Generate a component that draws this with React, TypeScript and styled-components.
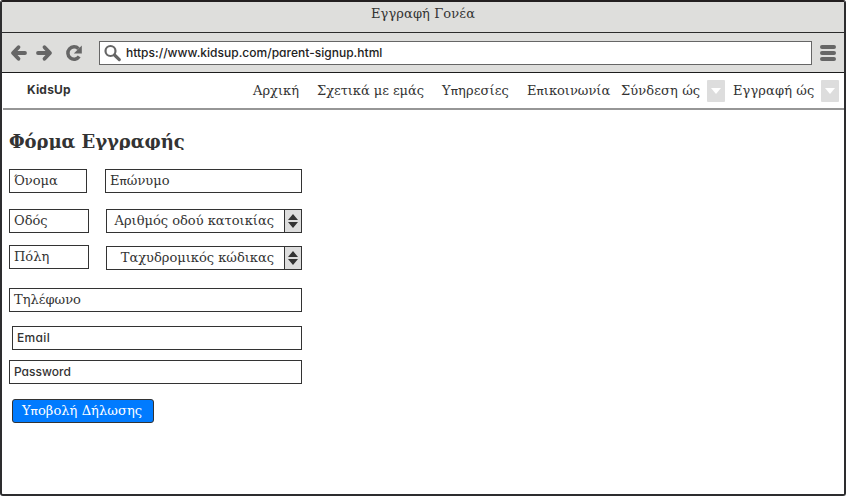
import React from "react";
import styled, { createGlobalStyle } from "styled-components";

const GlobalStyle = createGlobalStyle`
  * { box-sizing: border-box; }
  body { margin: 0; background: #fff; }
`;

const serif = `"DejaVu Serif", serif`;
const sans = `"Inter", "Liberation Sans", sans-serif`;

const Window = styled.div`
  width: 846px;
  height: 496px;
  border: 2px solid #2d2d2f;
  border-top-color: #231f20;
  border-radius: 3px;
  background: #fff;
  color: #333;
  font: 13px/16px ${serif};
  white-space: nowrap;
  overflow: hidden;
`;

const TitleBar = styled.header`
  height: 31px;
  padding-top: 4px;
  border-bottom: 1px solid #2b2b2b;
  background: #dededc;
  text-align: center;
  letter-spacing: 0.1px;
`;

const Toolbar = styled.div`
  display: flex;
  align-items: center;
  height: 40px;
  padding: 0 8px;
  border-bottom: 1px solid #1c1c1c;
  background: #dededc;
`;

const Controls = styled.div`
  display: flex;
  width: 89px;
`;

const AddressBar = styled.div`
  display: flex;
  align-items: center;
  width: 713px;
  height: 24px;
  margin-right: 8px;
  border: 1px solid #666;
  background: #fff;
  color: #222;
`;

const Latin = styled.span<{ $spacing?: number; $bold?: boolean }>`
  font-family: ${sans};
  font-size: 12px;
  font-weight: ${(p) => (p.$bold ? 700 : 500)};
  font-feature-settings: "cv11";
  letter-spacing: ${(p) => p.$spacing ?? 0}px;
`;

const Pi = styled.span`
  font-family: "Open Sans", sans-serif;
  font-size: 10.5px;
  font-weight: 600;
`;

const Nav = styled.nav`
  display: flex;
  align-items: center;
  height: 37px;
  margin-left: 1px;
  border-bottom: 2px solid #969696;
`;

const Brand = styled.div`
  width: 226px;
  padding: 0 0 1px 24px;
`;

const NavLink = styled.a<{ $width: number; $gap: number; $spacing?: number }>`
  flex: none;
  width: ${(p) => p.$width}px;
  margin-left: ${(p) => p.$gap}px;
  letter-spacing: ${(p) => p.$spacing ?? 0}px;
`;

const DropButton = styled.button`
  display: flex;
  flex: none;
  align-items: center;
  justify-content: center;
  width: 18px;
  height: 22px;
  padding: 0;
  margin-top: 1px;
  border: 0;
  border-radius: 1px;
  background: #ddd;
`;

const Form = styled.form`
  width: 300px;
  padding: 19px 0 0 7px;
`;

const Heading = styled.h1`
  height: 21px;
  margin: 0 0 19px;
  overflow: hidden;
  font: bold 18px/26px ${serif};
  letter-spacing: -0.07px;
`;

const Row = styled.div<{ $gap: number }>`
  display: flex;
  justify-content: space-between;
  margin-bottom: ${(p) => p.$gap}px;
`;

const Field = styled.div<{ $width: number }>`
  width: ${(p) => p.$width}px;
  height: 24px;
  padding: 3px 4px;
  border: 1px solid #333;
  background: #fff;
`;

const Stepper = styled.div<{ $top?: number }>`
  display: flex;
  width: 196px;
  height: 24px;
  margin-top: ${(p) => p.$top ?? 0}px;
  border: 1px solid #333;
`;

const StepperValue = styled.div`
  flex: 1;
  padding: 3px 10px 0 0;
  text-align: right;
`;

const StepperButtons = styled.div`
  display: flex;
  align-items: center;
  justify-content: center;
  width: 17px;
  border-left: 1px solid #333;
  background: #ddd;
`;

const Submit = styled.button`
  display: block;
  width: 142px;
  height: 24px;
  margin-left: 3px;
  padding: 0 2px 0 0;
  border: 1px solid #333;
  border-radius: 3px;
  background: #007bff;
  color: #fff;
  font: inherit;
  letter-spacing: 0.07px;
`;

const Icon = styled.svg`
  display: block;
  flex: none;
`;

const StepArrows = () => (
  <Icon width="12" height="16" viewBox="0 0 12 16" fill="#333">
    <path d="M6 1 11 7H1ZM1 9h10L6 15Z" />
  </Icon>
);

const DropArrow = () => (
  <Icon width="12" height="8" viewBox="0 0 12 8" fill="#fff">
    <path d="M1 1h10L6 7Z" />
  </Icon>
);

const NavigationIcons = () => (
  <Icon width="76" height="20" viewBox="0 0 76 20" fill="none" stroke="#666">
    <path
      d="M8.500 4.200 3 10l5.500 5.800M3.500 10H15M34.500 4.200 40 10l-5.500 5.800M39.500 10H28"
      strokeLinecap="round"
      strokeLinejoin="round"
      strokeWidth="3.800"
    />
    <path d="M69.200 13.600A6.200 6.200 0 1 1 68.500 5.700" strokeWidth="3.500" />
    <path d="M71.800 2.500v8h-8Z" fill="#666" stroke="none" />
  </Icon>
);

const SearchIcon = () => (
  <Icon width="26" height="20" viewBox="0 0 26 20" fill="none" stroke="#666">
    <circle cx="10.500" cy="8" r="5" strokeWidth="2.200" />
    <path d="m14.500 12 4.800 4.600" strokeWidth="3.200" strokeLinecap="round" />
  </Icon>
);

const MenuIcon = () => (
  <Icon width="16" height="16" viewBox="0 0 16 16" stroke="#666" strokeWidth="4" strokeLinecap="round">
    <path d="M2 2h12M2 8h12M2 14h12" />
  </Icon>
);

export default function App() {
  return (
    <Window>
      <GlobalStyle />
      <TitleBar>Εγγραφή Γονέα</TitleBar>
      <Toolbar>
        <Controls><NavigationIcons /></Controls>
        <AddressBar>
          <SearchIcon />
          <Latin $spacing={0.02}>https://www.kidsup.com/parent-signup.html</Latin>
        </AddressBar>
        <MenuIcon />
      </Toolbar>
      <Nav>
        <Brand><Latin $bold $spacing={0.2}>KidsUp</Latin></Brand>
        <NavLink $width={48} $gap={24}>Αρχική</NavLink>
        <NavLink $width={109} $gap={16} $spacing={-0.05}>Σχετικά με εμάς</NavLink>
        <NavLink $width={69} $gap={16} $spacing={0.1}>Υ<Pi>π</Pi>ηρεσίες</NavLink>
        <NavLink $width={84} $gap={16}>Ε<Pi>π</Pi>ικοινωνία</NavLink>
        <NavLink $width={86} $gap={10} $spacing={0.1}>Σύνδεση ώς</NavLink>
        <DropButton type="button"><DropArrow /></DropButton>
        <NavLink $width={88} $gap={8} $spacing={0.1}>Εγγραφή ώς</NavLink>
        <DropButton type="button"><DropArrow /></DropButton>
      </Nav>
      <Form>
        <Heading>Φόρμα Εγγραφής</Heading>
        <Row $gap={16}>
          <Field $width={78}>Όνομα</Field>
          <Field $width={197}>Ε<Pi>π</Pi>ώνυμο</Field>
        </Row>
        <Row $gap={12}>
          <Field $width={80}>Οδός</Field>
          <Stepper>
            <StepperValue>Αριθμός οδού κατοικίας</StepperValue>
            <StepperButtons><StepArrows /></StepperButtons>
          </Stepper>
        </Row>
        <Row $gap={18}>
          <Field $width={80}>Πόλη</Field>
          <Stepper $top={1}>
            <StepperValue>Ταχυδρομικός κώδικας</StepperValue>
            <StepperButtons><StepArrows /></StepperButtons>
          </Stepper>
        </Row>
        <Row $gap={14}><Field $width={293}>Τηλέφωνο</Field></Row>
        <Row $gap={10}>
          <span />
          <Field $width={290}><Latin $spacing={0.35}>Email</Latin></Field>
        </Row>
        <Row $gap={15}><Field $width={293}><Latin>Password</Latin></Field></Row>
        <Submit type="button">Υ<Pi>π</Pi>οβολή Δήλωσης</Submit>
      </Form>
    </Window>
  );
}
